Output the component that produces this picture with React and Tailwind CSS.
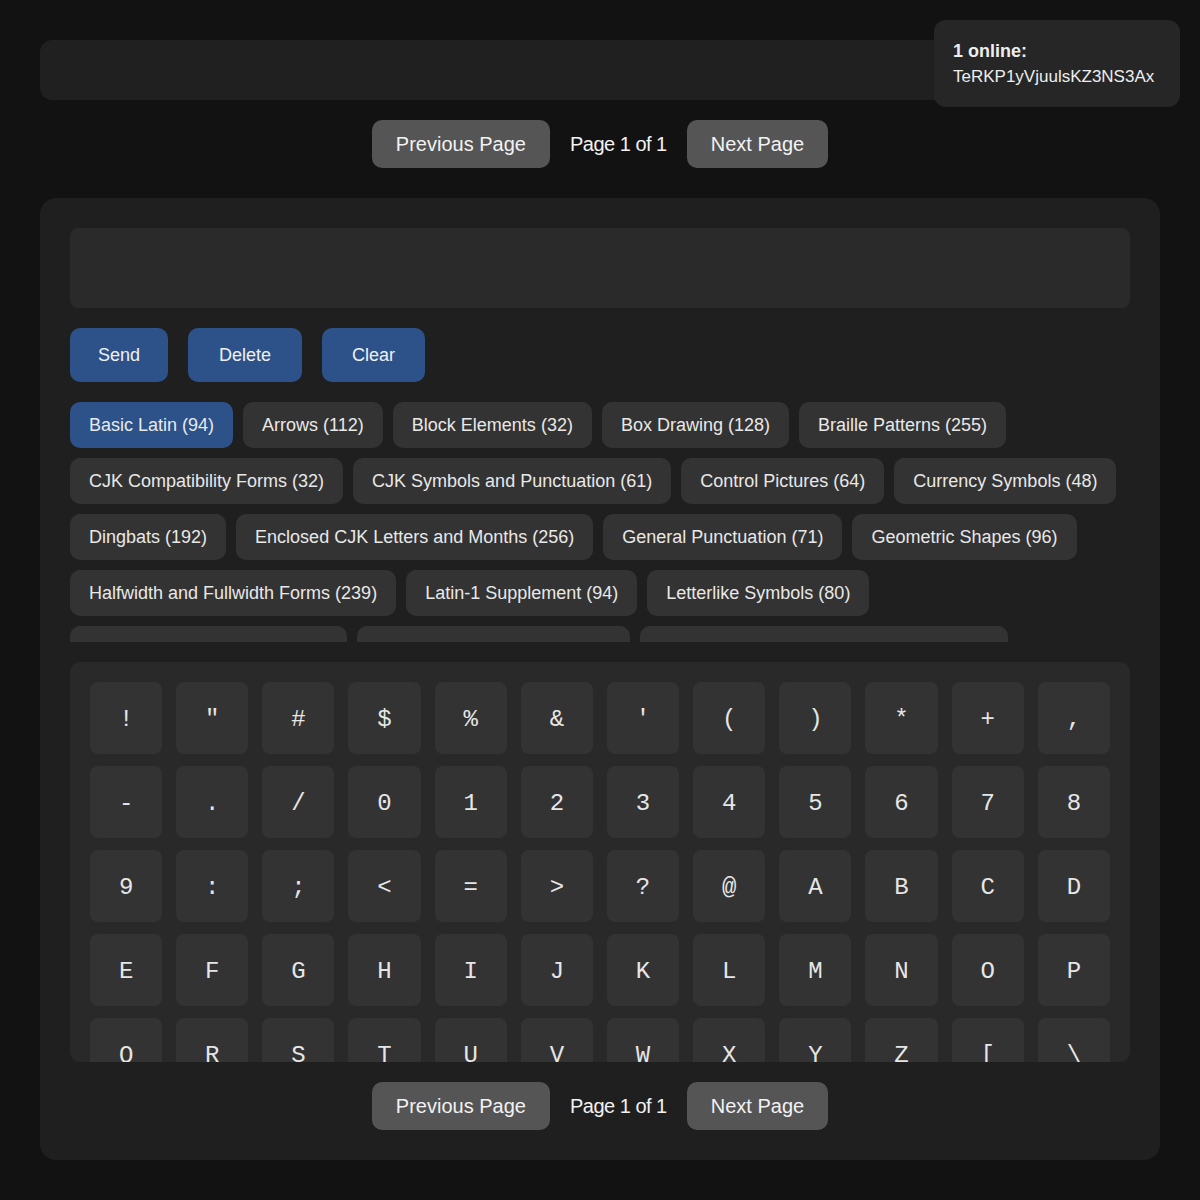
import { useState } from "react";

const blocks = [
  ["Basic Latin", 94],
  ["Arrows", 112],
  ["Block Elements", 32],
  ["Box Drawing", 128],
  ["Braille Patterns", 255],
  ["CJK Compatibility Forms", 32],
  ["CJK Symbols and Punctuation", 61],
  ["Control Pictures", 64],
  ["Currency Symbols", 48],
  ["Dingbats", 192],
  ["Enclosed CJK Letters and Months", 256],
  ["General Punctuation", 71],
  ["Geometric Shapes", 96],
  ["Halfwidth and Fullwidth Forms", 239],
  ["Latin-1 Supplement", 94],
  ["Letterlike Symbols", 80],
  ["Mathematical Operators", 256],
  ["Miscellaneous Symbols", 256],
  ["Miscellaneous Symbols and Arrows", 256],
];

// printable ASCII, ! through ~
const chars = Array.from({ length: 94 }, (_, i) => String.fromCharCode(33 + i));

function Pager() {
  return (
    <div className="flex items-center justify-center gap-5 text-[20px] text-[#f2f2f2]">
      <button className="h-12 px-6 rounded-[10px] bg-[#555555]">Previous Page</button>
      <span className="tracking-[-0.5px]">Page 1 of 1</span>
      <button className="h-12 px-6 rounded-[10px] bg-[#555555]">Next Page</button>
    </div>
  );
}

export default function App() {
  const [active, setActive] = useState("Basic Latin");
  const [text, setText] = useState("");

  return (
    <div
      className="relative min-h-[1200px] bg-[#121212] px-10 pt-10 pb-10 text-white"
      style={{ fontFamily: '"Liberation Sans", Arial, sans-serif' }}
    >
      {/* presence box */}
      <div className="absolute top-5 right-5 w-[246px] h-[87px] rounded-xl bg-[#262626] px-[19px] pt-[19px] leading-[25px] text-[17px] text-[#ededed]">
        <div className="font-bold text-[18px]">1 online:</div>
        <div>TeRKP1yVjuulsKZ3NS3Ax</div>
      </div>

      <div className="h-[60px] rounded-xl bg-[#202020]" />

      <div className="mt-5">
        <Pager />
      </div>

      <div className="mt-[30px] rounded-2xl bg-[#1f1f1f] p-[30px] flex flex-col gap-5">
        <textarea
          value={text}
          onChange={(e) => setText(e.target.value)}
          className="h-20 w-full resize-none rounded-lg bg-[#2a2a2a] p-4 text-lg outline-none"
        />

        <div className="flex gap-5 text-[18px] text-[#f0f0f0]">
          <button onClick={() => {}} className="h-[54px] px-7 rounded-[10px] bg-[#2c5289]">Send</button>
          <button onClick={() => setText(text.slice(0, -1))} className="h-[54px] px-[31px] rounded-[10px] bg-[#2c5289]">Delete</button>
          <button onClick={() => setText("")} className="h-[54px] px-[30px] rounded-[10px] bg-[#2c5289]">Clear</button>
        </div>

        <div className="h-[240px] overflow-hidden">
          <div className="flex flex-wrap gap-[10px]">
            {blocks.map(([name, n]) => (
              <button
                key={name}
                onClick={() => setActive(name)}
                className={`h-[46px] px-[19px] rounded-[10px] text-[18px] whitespace-nowrap text-[#e8e8e8] ${
                  active === name ? "bg-[#2c5289]" : "bg-[#333333]"
                }`}
              >
                {name} ({n})
              </button>
            ))}
          </div>
        </div>

        <div className="h-[400px] overflow-hidden rounded-[10px] bg-[#292929] p-5">
          <div className="grid grid-cols-12 gap-x-[14px] gap-y-3">
            {chars.map((c) => (
              <button
                key={c}
                onClick={() => setText(text + c)}
                className="h-[72px] pt-1 rounded-lg bg-[#333333] flex items-center justify-center text-[24px] text-[#e6e6e6]"
                style={{ fontFamily: '"Liberation Mono", monospace' }}
              >
                {c}
              </button>
            ))}
          </div>
        </div>

        <Pager />
      </div>
    </div>
  );
}
